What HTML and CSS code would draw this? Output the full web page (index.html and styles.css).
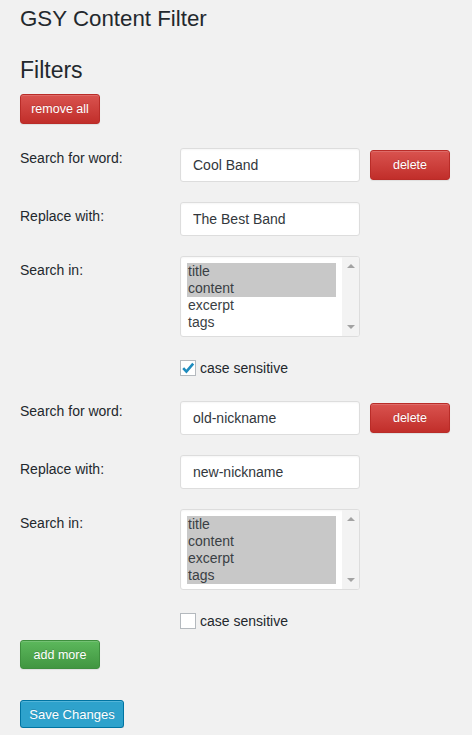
FILE: index.html
```html
<!DOCTYPE html>
<html lang="en">
<head>
<meta charset="utf-8">
<title>GSY Content Filter</title>
<link rel="stylesheet" href="styles.css">
</head>
<body>
<div class="page">
  <h1 class="title">GSY Content Filter</h1>
  <h2 class="section-title">Filters</h2>
  <button class="btn btn-red btn-remove">remove all</button>

  <div class="filters">
    <div class="filter">
      <div class="row">
        <label class="label label-tight">Search for word:</label>
        <div class="field">
          <input class="text-input" type="text" value="Cool Band">
          <button class="btn btn-red btn-delete">delete</button>
        </div>
      </div>
      <div class="row">
        <label class="label">Replace with:</label>
        <div class="field">
          <input class="text-input" type="text" value="The Best Band">
        </div>
      </div>
      <div class="row">
        <label class="label">Search in:</label>
        <div class="field">
          <div class="listbox" role="listbox" aria-multiselectable="true">
            <div class="options">
              <div class="option selected">title</div>
              <div class="option selected">content</div>
              <div class="option">excerpt</div>
              <div class="option">tags</div>
            </div>
            <div class="scrollbar">
              <span class="arrow arrow-up"></span>
              <span class="arrow arrow-down"></span>
            </div>
          </div>
        </div>
      </div>
      <div class="check-row">
        <span class="checkbox checked">
          <svg viewBox="0 0 16 16" width="16" height="16"><path d="M3.2 8.2 L6.4 11.6 L13.2 3.6" fill="none" stroke="#1e8cbe" stroke-width="2.6"/></svg>
        </span>
        <span class="check-label">case sensitive</span>
      </div>
    </div>

    <div class="filter">
      <div class="row">
        <label class="label label-tight">Search for word:</label>
        <div class="field">
          <input class="text-input" type="text" value="old-nickname">
          <button class="btn btn-red btn-delete">delete</button>
        </div>
      </div>
      <div class="row">
        <label class="label">Replace with:</label>
        <div class="field">
          <input class="text-input" type="text" value="new-nickname">
        </div>
      </div>
      <div class="row">
        <label class="label">Search in:</label>
        <div class="field">
          <div class="listbox" role="listbox" aria-multiselectable="true">
            <div class="options">
              <div class="option selected">title</div>
              <div class="option selected">content</div>
              <div class="option selected">excerpt</div>
              <div class="option selected">tags</div>
            </div>
            <div class="scrollbar">
              <span class="arrow arrow-up"></span>
              <span class="arrow arrow-down"></span>
            </div>
          </div>
        </div>
      </div>
      <div class="check-row">
        <span class="checkbox"></span>
        <span class="check-label">case sensitive</span>
      </div>
    </div>
  </div>

  <button class="btn btn-green btn-add">add more</button>
  <button class="btn btn-blue btn-save">Save Changes</button>
</div>
</body>
</html>
```

FILE: styles.css
```css
html, body {
  margin: 0;
  padding: 0;
  background: #f1f1f1;
}

body {
  font-family: "Liberation Sans", Arial, sans-serif;
  color: #23282d;
  font-size: 14px;
}

.page {
  padding: 4px 20px 0 20px;
  display: flex;
  flex-direction: column;
  align-items: flex-start;
}

.title {
  margin: 0;
  font-size: 22.3px;
  line-height: 29px;
  font-weight: 400;
  color: #23282d;
}

.section-title {
  margin: 23px 0 9px 0;
  font-size: 23px;
  line-height: 29px;
  font-weight: 400;
  color: #23282d;
}

.btn {
  font-family: "Liberation Sans", Arial, sans-serif;
  font-size: 12.5px;
  color: #fff;
  border-radius: 3px;
  border: 1px solid;
  padding: 0;
  margin: 0;
  cursor: pointer;
  text-shadow: 0 -1px 0 rgba(0, 0, 0, 0.15);
}

.btn-red {
  background: linear-gradient(to bottom, #d9534f 0%, #c12e2a 100%);
  border-color: #b92c28;
  box-shadow: inset 0 1px 0 rgba(255, 255, 255, 0.15), 0 1px 1px rgba(0, 0, 0, 0.075);
}

.btn-green {
  background: linear-gradient(to bottom, #5cb85c 0%, #419641 100%);
  border-color: #3e8f3e;
  box-shadow: inset 0 1px 0 rgba(255, 255, 255, 0.15), 0 1px 1px rgba(0, 0, 0, 0.075);
}

.btn-blue {
  background: #2ea2cc;
  border-color: #0074a2;
  box-shadow: inset 0 1px 0 rgba(120, 200, 230, 0.5), 0 1px 0 rgba(0, 0, 0, 0.15);
}

.btn-remove {
  width: 80px;
  height: 30px;
}

.btn-delete {
  width: 80px;
  height: 30px;
  margin-left: 10px;
}

.btn-add {
  width: 80px;
  height: 29px;
  margin-top: 11px;
}

.btn-save {
  width: 104px;
  height: 28px;
  margin-top: 31px;
  font-size: 13px;
}

.filters {
  margin-top: 24px;
  display: flex;
  flex-direction: column;
  gap: 25px;
}

.filter {
  display: flex;
  flex-direction: column;
}

.row {
  display: flex;
  align-items: flex-start;
  margin-bottom: 20px;
}

.label {
  width: 160px;
  flex: none;
  font-size: 14px;
  line-height: 18px;
  padding-top: 5px;
  color: #23282d;
}

.label-tight {
  padding-top: 1px;
}

.field {
  display: flex;
  align-items: center;
}

.text-input {
  width: 180px;
  height: 34px;
  box-sizing: border-box;
  border: 1px solid #dddddd;
  border-radius: 3px;
  background: #fff;
  padding: 0 12px;
  margin: 0;
  font-family: "Liberation Sans", Arial, sans-serif;
  font-size: 14px;
  color: #32373c;
  box-shadow: inset 0 1px 2px rgba(0, 0, 0, 0.04);
  outline: none;
}

.listbox {
  width: 180px;
  height: 81px;
  box-sizing: border-box;
  border: 1px solid #dddddd;
  border-radius: 3px;
  background: #fff;
  display: flex;
  box-shadow: inset 0 1px 2px rgba(0, 0, 0, 0.04);
}

.options {
  flex: 1;
  padding: 6px 6px 0 6px;
}

.option {
  font-size: 14px;
  line-height: 17px;
  height: 17px;
  color: #3a3f44;
  padding-left: 1px;
}

.option.selected {
  background: #c8c8c8;
}

.scrollbar {
  width: 17px;
  flex: none;
  background: #f3f3f3;
  position: relative;
  border-radius: 0 2px 2px 0;
}

.arrow {
  position: absolute;
  left: 5px;
  width: 0;
  height: 0;
  border-left: 4px solid transparent;
  border-right: 4px solid transparent;
}

.arrow-up {
  top: 7px;
  border-bottom: 4px solid #a3a3a3;
}

.arrow-down {
  bottom: 7px;
  border-top: 4px solid #a3a3a3;
}

.check-row {
  display: flex;
  align-items: center;
  margin-left: 160px;
  margin-top: 3px;
  height: 16px;
}

.checkbox {
  width: 16px;
  height: 16px;
  box-sizing: border-box;
  border: 1px solid #b4b9be;
  background: #fff;
  display: flex;
  align-items: center;
  justify-content: center;
  flex: none;
}

.checkbox svg {
  display: block;
  margin: -1px;
}

.check-label {
  margin-left: 4px;
  font-size: 14px;
  line-height: 16px;
  color: #23282d;
}
```
